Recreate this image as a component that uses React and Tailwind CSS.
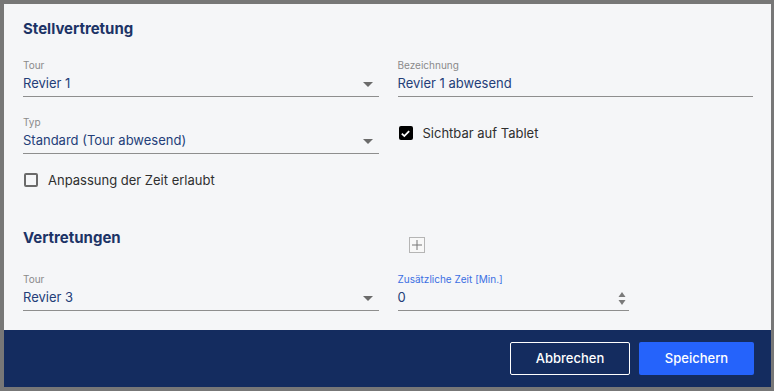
import React from 'react'

function Caret() {
  return (
    <svg viewBox="0 0 10 5" className="h-[5px] w-[10px] text-[#6b6b6b]" fill="currentColor" aria-hidden="true">
      <path d="M0 0h10L5 5z" />
    </svg>
  )
}

function Spinner() {
  return (
    <svg viewBox="0 0 8 15" className="h-[15px] w-[8px] text-[#7a7a7a]" fill="currentColor" aria-hidden="true">
      <path d="M4 1L7.5 6h-7z" />
      <path d="M0.5 9h7L4 14z" />
    </svg>
  )
}

function SelectField({ label, value }) {
  return (
    <div>
      <div className="text-[10px] leading-[13px] text-[#8a8a8a]">{label}</div>
      <div className="flex h-[25px] items-center justify-between border-b border-[#8e8e8e] pr-[6px] text-[13px] text-[#243e78]">
        <span>{value}</span>
        <Caret />
      </div>
    </div>
  )
}

function Checkbox({ checked, label }) {
  return (
    <label className="flex items-center gap-[10px] text-[13px] leading-[14px] text-[#2f2f2f]">
      {checked ? (
        <span className="flex h-[14px] w-[14px] items-center justify-center rounded-[2px] bg-black">
          <svg viewBox="0 0 12 12" className="h-[11px] w-[11px]" fill="none" stroke="white" strokeWidth={2} aria-hidden="true">
            <path d="M2 6.2l2.7 2.6L10 3.3" />
          </svg>
        </span>
      ) : (
        <span className="h-[14px] w-[14px] rounded-[2px] border-2 border-[#6a6a6a]" />
      )}
      {label}
    </label>
  )
}

export default function App() {
  return (
    <div
      className="h-[391px] w-full bg-[#777777] p-[4px] pr-[3px]"
      style={{ fontFamily: "Inter, 'Liberation Sans', sans-serif" }}
    >
      <div className="flex h-full flex-col bg-[#f5f6f8]">
        {/* Content */}
        <div className="flex-1 pl-[19px] pr-[18px] pt-[15px]">
          <h2 className="text-[15px] font-bold leading-[20px] text-[#1c3366]">Stellvertretung</h2>

          <div className="mt-[20px] grid grid-cols-2 gap-x-[19px]">
            <SelectField label="Tour" value="Revier 1" />
            <div>
              <div className="text-[10px] leading-[13px] text-[#8a8a8a]">Bezeichnung</div>
              <div className="flex h-[25px] items-center border-b border-[#8e8e8e] text-[13px] text-[#243e78]">
                Revier 1 abwesend
              </div>
            </div>
          </div>

          <div className="mt-[19px] grid grid-cols-2 gap-x-[19px]">
            <SelectField label="Typ" value="Standard (Tour abwesend)" />
            <div className="pl-[1px] pt-[10px]">
              <Checkbox checked label="Sichtbar auf Tablet" />
            </div>
          </div>

          <div className="mt-[19px] pl-[1px]">
            <Checkbox label="Anpassung der Zeit erlaubt" />
          </div>

          <div className="mt-[41px] grid grid-cols-2 gap-x-[19px]">
            <h2 className="text-[15px] font-bold leading-[20px] text-[#1c3366]">Vertretungen</h2>
            <div className="pb-[2px] pl-[11px] pt-[9px]">
              <button className="flex h-[16px] w-[16px] items-center justify-center border border-[#b5b5b5] bg-[#f8f8f8]">
                <svg viewBox="0 0 10 10" className="h-[10px] w-[10px]" stroke="#777" strokeWidth={1} aria-hidden="true">
                  <path d="M5 0v10M0 5h10" />
                </svg>
              </button>
            </div>
          </div>

          <div className="mt-[18px] grid grid-cols-2 gap-x-[19px]">
            <SelectField label="Tour" value="Revier 3" />
            <div className="w-[231px]">
              <div className="text-[10px] leading-[13px] text-[#3b6fe3]">Zusätzliche Zeit [Min.]</div>
              <div className="flex h-[25px] items-center justify-between border-b border-[#8e8e8e] pr-[3px] text-[13px] text-[#243e78]">
                <span>0</span>
                <Spinner />
              </div>
            </div>
          </div>
        </div>

        {/* Footer */}
        <div className="flex h-[57px] items-center justify-end gap-[9px] bg-[#142c5f] pr-[17px]">
          <button className="h-[33px] w-[120px] rounded-[2px] border border-white text-[13px] font-medium text-white">
            Abbrechen
          </button>
          <button className="h-[33px] w-[115px] rounded-[2px] bg-[#2563fb] text-[13px] font-medium text-white">
            Speichern
          </button>
        </div>
      </div>
    </div>
  )
}
